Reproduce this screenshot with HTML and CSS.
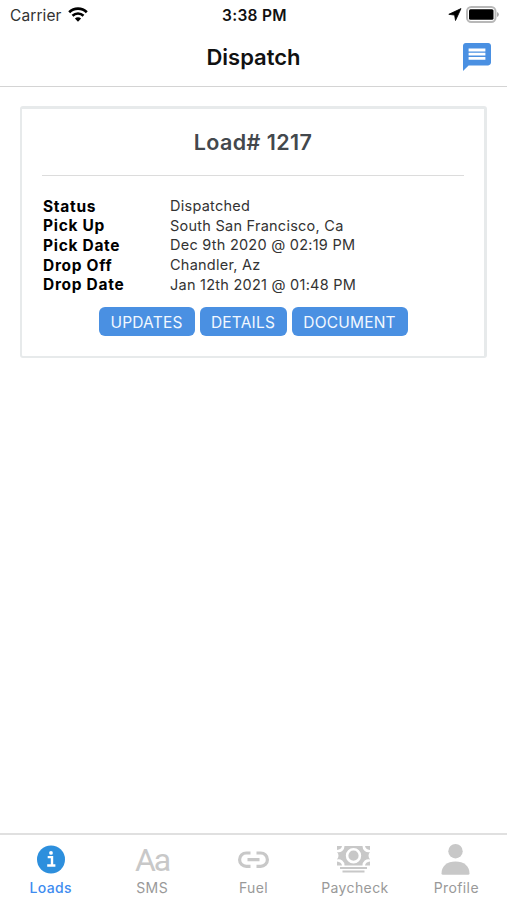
FILE: index.html
```html
<!DOCTYPE html>
<html lang="en">
<head>
    <meta charset="UTF-8">
    <meta name="viewport" content="width=device-width, initial-scale=1.0">
    <title>Dispatch</title>
    <link rel="stylesheet" href="styles.css">
</head>
<body>
    <div class="status-bar">
        <div class="carrier">
            <span>Carrier</span>
            <svg width="20" height="15" viewBox="0 0 20 15">
                <path d="M1.2 5.2a12.6 12.6 0 0 1 17.6 0" fill="none" stroke="#000" stroke-width="2.7"/>
                <path d="M4.5 8.7a8 8 0 0 1 11 0" fill="none" stroke="#000" stroke-width="2.6"/>
                <path d="M10 14.7L6.9 11.5a4.4 4.4 0 0 1 6.2 0z"/>
            </svg>
        </div>
        <div class="time">3:38 PM</div>
        <div class="indicators">
            <svg width="14" height="13" viewBox="0 0 14 13">
                <path d="M13 .6L.8 6.300l5.800.8.9 5.400z" stroke="#000" stroke-width=".8"/>
            </svg>
            <svg width="33" height="17" viewBox="0 0 33 17">
                <rect x="1" y="1" width="28.5" height="15" rx="4.2" fill="#fff" stroke="#b8b8b8" stroke-width="2"/>
                <rect x="3" y="3.2" width="24.5" height="10.6" rx="1.5"/>
                <path d="M31 6v5a2.6 2.6 0 0 0 0-5z" fill="#aaa"/>
            </svg>
        </div>
    </div>

    <header class="header">
        <h1>Dispatch</h1>
        <svg class="chat" width="28" height="28" viewBox="2 2 20 20">
            <path fill="#4a90e2" d="M20 2H4c-1.1 0-2 .9-2 2v18l4-4h14c1.1 0 2-.9 2-2V4c0-1.1-.9-2-2-2z"/>
            <path fill="#fff" d="M6 6h12v2H6zM6 9h12v2H6zM6 12h12v2H6z"/>
        </svg>
    </header>

    <main>
        <div class="card">
            <h2>Load# 1217</h2>
            <dl class="info">
                <dt>Status</dt><dd>Dispatched</dd>
                <dt>Pick Up</dt><dd>South San Francisco, Ca</dd>
                <dt>Pick Date</dt><dd>Dec 9th 2020 @ 02:19 PM</dd>
                <dt>Drop Off</dt><dd>Chandler, Az</dd>
                <dt>Drop Date</dt><dd>Jan 12th 2021 @ 01:48 PM</dd>
            </dl>
            <div class="buttons">
                <button type="button" class="btn-updates">UPDATES</button>
                <button type="button" class="btn-details">DETAILS</button>
                <button type="button" class="btn-document">DOCUMENT</button>
            </div>
        </div>
    </main>

    <nav class="tabs">
        <a class="tab active">
            <svg width="36" height="34" viewBox="0 0 36 34">
                <circle cx="18" cy="16.5" r="14" fill="#2d8fdd"/>
                <path d="M14.7 14.1h4.3v8M14.2 22.5h8.200" fill="none" stroke="#fff" stroke-width="2.4"/>
                <circle cx="18" cy="9.9" r="1.9" fill="#fff"/>
            </svg>
            <span>Loads</span>
        </a>
        <a class="tab">
            <span class="aa">Aa</span>
            <span>SMS</span>
        </a>
        <a class="tab">
            <svg width="36" height="34" viewBox="0 0 36 34">
                <path d="M14.500 10h-4.200a6.700 6.700 0 0 0 0 13.400h4.200M20.500 10h4.200a6.700 6.700 0 0 1 0 13.400h-4.200M11.500 16.700h12" fill="none" stroke="#c8c8c8" stroke-width="3.200"/>
            </svg>
            <span>Fuel</span>
        </a>
        <a class="tab">
            <svg width="36" height="34" viewBox="0 0 36 34">
                <path d="M7.500 3h18a6 6 0 0 0 7.500 6q-3 3.700 0 7.500a6 6 0 0 0-7.500 6h-18a6 6 0 0 0-7.500-6q3-3.800 0-7.500a6 6 0 0 0 7.500-6z" fill="#c8c8c8"/>
                <path d="M0 3h5Q4.500 6.500 0 7zM33 3h-5q.5 3.500 5 4zM0 22.500h5Q4.500 19 0 18.500zM33 22.500h-5q.5-3.500 5-4z" fill="#c8c8c8"/>
                <circle cx="16.500" cy="12.700" r="6.400" fill="#c8c8c8" stroke="#fff" stroke-width="2.600"/>
                <path d="M3 25h27M5.500 28.500h22" stroke="#c8c8c8" stroke-width="2"/>
            </svg>
            <span>Paycheck</span>
        </a>
        <a class="tab">
            <svg width="36" height="34" viewBox="0 0 36 34">
                <circle cx="17.5" cy="8.2" r="7.2" fill="#c8c8c8"/>
                <path d="M3.500 30.500c0-7.500 5.500-12 14-12s14 4.500 14 12q0 1.300-1.500 1.300h-25q-1.500 0-1.500-1.300z" fill="#c8c8c8"/>
            </svg>
            <span>Profile</span>
        </a>
    </nav>
</body>
</html>
```
FILE: styles.css
```css
* {
    box-sizing: border-box;
}

body {
    margin: 0;
    height: 900px;
    display: flex;
    flex-direction: column;
    background-color: #fff;
    color: #111;
    font-family: Inter, "Liberation Sans", sans-serif;
    overflow: hidden;
}

.status-bar {
    display: grid;
    grid-template-columns: 1fr auto 1fr;
    align-items: center;
    height: 30px;
    padding: 0 8px 0 10px;
    font-size: 15.5px;
}

.carrier {
    display: flex;
    align-items: center;
    gap: 6px;
    color: #333;
    letter-spacing: 0.1px;
}

.carrier svg {
    margin-bottom: 2px;
}

.time {
    font-weight: 600;
    letter-spacing: 0.3px;
}

.indicators {
    display: flex;
    justify-content: flex-end;
    align-items: center;
    gap: 4px;
    padding-bottom: 2px;
}

.header {
    display: grid;
    grid-template-columns: 1fr auto 1fr;
    align-items: center;
    height: 57px;
    padding: 0 16px 2px;
    border-bottom: 1px solid #d4d4d4;
}

.header h1 {
    grid-column: 2;
    margin: 0;
    font-size: 22px;
    font-weight: 600;
}

.chat {
    justify-self: end;
}

main {
    flex: 1;
    padding: 19px 20px 0;
}

.card {
    height: 252px;
    padding: 20px;
    border: 2px solid #e7eaeb;
    border-width: 3px 3px 2px 2px;
    border-radius: 3px;
}

.card h2 {
    margin: 0;
    padding-bottom: 19px;
    border-bottom: 1px solid #dcdcdc;
    color: #43484d;
    font-size: 21.5px;
    font-weight: 600;
    letter-spacing: 0.4px;
    line-height: 27px;
    text-align: center;
}

.info {
    display: grid;
    grid-template-columns: 127px 1fr;
    grid-auto-rows: 19.6px;
    align-items: center;
    margin: 20px 0 13px;
    padding-left: 1px;
}

.info dt {
    padding-top: 1px;
    color: #000;
    font-size: 15.5px;
    font-weight: 700;
    letter-spacing: 0.7px;
}

.info dd {
    margin: 0;
    color: #333;
    font-size: 14.5px;
    letter-spacing: 0.25px;
}

.buttons {
    display: flex;
    justify-content: center;
    gap: 5px;
}

.buttons button {
    height: 29px;
    padding: 3px 0 0;
    border: none;
    border-radius: 6px;
    background-color: #4a90e2;
    color: #f2f8ff;
    font-family: inherit;
    font-size: 15.5px;
    letter-spacing: 0.2px;
}

.btn-updates {
    width: 96px;
}

.btn-details {
    width: 87px;
}

.btn-document {
    width: 116px;
}

.tabs {
    display: flex;
    height: 67px;
    padding-top: 8px;
    border-top: 2px solid #e0e0e0;
}

.tab {
    flex: 1;
    display: flex;
    flex-direction: column;
    align-items: center;
    gap: 2px;
    color: #999;
    font-size: 14px;
    letter-spacing: 0.4px;
}

.active {
    color: #3f8cf0;
    font-weight: 500;
}

.tab .aa {
    height: 34px;
    color: #c8c8c8;
    font-family: Roboto, sans-serif;
    font-size: 32px;
    letter-spacing: -2px;
    line-height: 34px;
}
```
